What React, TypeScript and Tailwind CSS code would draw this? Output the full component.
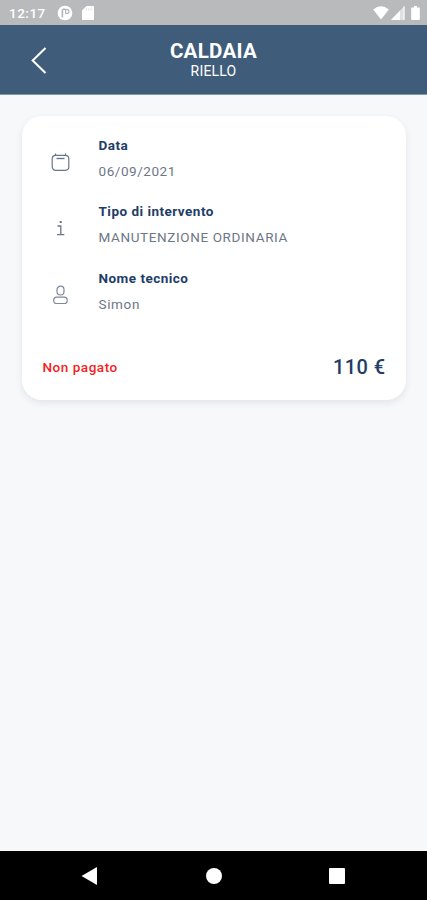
import type { ReactNode } from "react";

function StatusBar() {
  return (
    <div className="flex h-[25px] shrink-0 items-center justify-between bg-[#b9babb] pr-[7px] pl-[9px] text-white">
      <div className="flex items-center">
        <span className="w-[48px] pt-px text-[13.500px] leading-[25px] font-medium tracking-[0.5px] whitespace-nowrap">12:17</span>
        <svg width="16" height="16" viewBox="0 0 16 16" className="mt-px">
          <circle cx="8" cy="8" r="7.3" fill="white" />
          <path d="M5.400 12.500V4.500M5.400 4.300H8" fill="none" stroke="#b5b6b7" strokeWidth="1.6" />
          <path d="M8.700 8.500V4.300H9.800A2 2 0 0 1 9.800 8.500Z" fill="none" stroke="#b5b6b7" strokeWidth="1.200" />
        </svg>
        <svg width="12" height="14" viewBox="0 0 12 14" className="ml-[9px] mt-px">
          <path d="M4.6 0H11a1 1 0 0 1 1 1v12a1 1 0 0 1-1 1H1a1 1 0 0 1-1-1V4.6Z" fill="white" />
          <path d="M4.5 2.2v2.3M6.8 2.2v2.3M9.1 2.2v2.3" stroke="#dcdcdd" strokeWidth="0.8" />
        </svg>
      </div>
      <div className="flex items-center">
        <svg width="16" height="14" viewBox="0 0 16 14">
          <path d="M8 13.5L0.2 3.4Q8 -2.7 15.8 3.4Z" fill="white" />
        </svg>
        <svg width="14" height="14" viewBox="0 0 14 14" className="ml-[2px]">
          <path d="M13.5 0V14H0Z" fill="#e0e0e1" />
          <path d="M9 4.7V14H0Z" fill="white" />
          <path d="M13.5 0v14h-1V1Z" fill="white" />
        </svg>
        <svg width="9" height="14" viewBox="0 0 9 14" className="ml-[6px]">
          <path d="M3 0h3v1.5h2a.8.8 0 0 1 .8.8v10.9a.8.8 0 0 1-.8.8H1a.8.8 0 0 1-.8-.8V2.300a.8.8 0 0 1 .8-.8h2Z" fill="white" />
        </svg>
      </div>
    </div>
  );
}

function Header() {
  return (
    <header className="grid h-[70px] shrink-0 grid-cols-[64px_1fr_64px] items-center border-b border-[#8699ad] bg-[#3f5d7b] text-white">
      <button aria-label="Indietro" className="pt-px pl-[31px]">
        <svg width="16" height="27" viewBox="0 0 16 27" fill="none" stroke="white" strokeWidth="2">
          <path d="M14.500 1L1.700 13.500L14.500 26" />
        </svg>
      </button>
      <div className="flex flex-col items-center pt-px">
        <h1 className="text-[20.500px] leading-[23px] font-bold tracking-[0.3px]">CALDAIA</h1>
        <p className="text-[14px] leading-[17px] tracking-[0.2px]">RIELLO</p>
      </div>
    </header>
  );
}

function CalendarIcon() {
  return (
    <svg width="20" height="20" viewBox="0 0 20 20" fill="none" stroke="#69758a" strokeWidth="1.200">
      <rect x="1.200" y="3.300" width="16.600" height="15" rx="3.500" />
      <path d="M4.500 3.300V1.500M14.500 3.300V1.500" />
      <path d="M5.500 6.500H13.500" strokeWidth="1.400" />
    </svg>
  );
}

function InfoIcon() {
  return (
    <svg width="20" height="20" viewBox="0 0 20 20" fill="none" stroke="#69758a" strokeWidth="1.300">
      <path d="M6.500 8H9.800V16.500M6 16.700H13.300" />
      <rect x="8.700" y="3" width="2" height="2" fill="#69758a" stroke="none" />
    </svg>
  );
}

function PersonIcon() {
  return (
    <svg width="20" height="20" viewBox="0 0 20 20" fill="none" stroke="#7d889a" strokeWidth="1.200">
      <rect x="6" y="1.200" width="7" height="8.800" rx="3.500" />
      <rect x="2.700" y="12.200" width="13.500" height="6.300" rx="3.100" />
    </svg>
  );
}

function Detail({ icon, label, children }: { icon: ReactNode; label: string; children: ReactNode }) {
  return (
    <div className="flex h-[66.300px] items-start">
      <div className="w-[56px] shrink-0 pt-[17px] pl-[8px]">{icon}</div>
      <div className="whitespace-nowrap">
        <div className="text-[13.500px] leading-[20px] font-bold tracking-[0.480px] text-[#213d68]">{label}</div>
        <div className="mt-[6px] text-[13.500px] leading-[20px] text-[#6d7786]">{children}</div>
      </div>
    </div>
  );
}

function NavigationBar() {
  return (
    <nav className="grid h-[49px] shrink-0 grid-cols-[123px_1fr_123px] items-center bg-black px-[28px]">
      <svg width="18" height="18" viewBox="0 0 18 18" className="ml-[53px]">
        <path d="M0.500 9L16 0V18Z" fill="white" />
      </svg>
      <span className="size-[16px] justify-self-center rounded-full bg-white" />
      <span className="ml-[53px] size-[16px] rounded-[1px] bg-white" />
    </nav>
  );
}

export default function App() {
  return (
    <div className="flex h-[900px] w-[427px] flex-col overflow-hidden bg-[#f6f8fa] font-[Roboto,sans-serif]">
      <StatusBar />
      <Header />
      <main className="flex-1 pt-[21px] pr-[21px] pl-[22px]">
        <section className="h-[284px] rounded-[20px] bg-white px-[20.500px] pt-[19px] shadow-[0_3px_7px_rgba(30,50,70,0.09)]">
          <Detail icon={<CalendarIcon />} label="Data">
            <span className="tracking-[0.550px]">06/09/2021</span>
          </Detail>
          <Detail icon={<InfoIcon />} label="Tipo di intervento">
            <span className="tracking-[0.620px]">MANUTENZIONE ORDINARIA</span>
          </Detail>
          <Detail icon={<PersonIcon />} label="Nome tecnico">
            <span className="tracking-[0.650px]">Simon</span>
          </Detail>
          <div className="mt-[20px] flex h-[26px] items-center justify-between">
            <span className="pt-px text-[13.500px] font-medium tracking-[0.530px] text-[#f22222]">Non pagato</span>
            <span className="text-[20px] font-medium tracking-[0.4px] text-[#213d68]">110 €</span>
          </div>
        </section>
      </main>
      <NavigationBar />
    </div>
  );
}
